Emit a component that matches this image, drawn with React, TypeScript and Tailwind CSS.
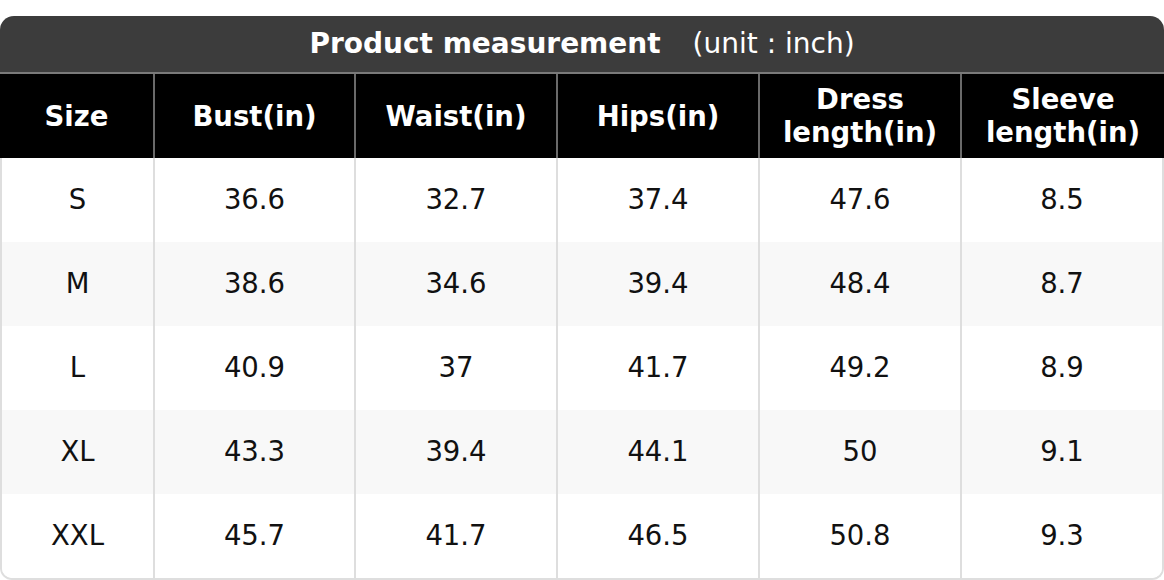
const headers = ["Size", "Bust(in)", "Waist(in)", "Hips(in)", "Dress length(in)", "Sleeve length(in)"];

const rows = [
  ["S", "36.6", "32.7", "37.4", "47.6", "8.5"],
  ["M", "38.6", "34.6", "39.4", "48.4", "8.7"],
  ["L", "40.9", "37", "41.7", "49.2", "8.9"],
  ["XL", "43.3", "39.4", "44.1", "50", "9.1"],
  ["XXL", "45.7", "41.7", "46.5", "50.8", "9.3"],
];

export default function App() {
  return (
    <div className="bg-white pt-4 font-['DejaVu_Sans',sans-serif]">
      {/* Title */}
      <div className="flex h-14 items-center justify-center rounded-t-[14px] bg-[#3c3c3c] text-[28px] text-white">
        <span className="font-bold">Product measurement</span>
        <span className="ml-8">(unit : inch)</span>
      </div>
      <div className="h-[2px] bg-[#7a7a7a]" />

      {/* Header */}
      <div className="grid h-[84px] grid-cols-[155px_201px_202px_202px_202px_1fr] bg-black">
        {headers.map((h, i) => (
          <div
            key={h}
            className={`flex items-center justify-center px-2 text-center text-[27.5px] font-bold leading-[33px] text-white ${
              i < headers.length - 1 ? "border-r-2 border-[#6a6a6a]" : ""
            }`}
          >
            {h}
          </div>
        ))}
      </div>

      {/* Body */}
      <div className="overflow-hidden rounded-b-[12px] border-x-2 border-b-2 border-[#dedede]">
        {rows.map((r, ri) => (
          <div
            key={r[0]}
            className={`grid h-[84px] grid-cols-[153px_201px_202px_202px_202px_1fr] ${
              ri % 2 === 1 ? "bg-[#f8f8f8]" : "bg-white"
            }`}
          >
            {r.map((v, i) => (
              <div
                key={i}
                className={`flex items-center justify-center text-[27.5px] text-[#111] ${
                  i < r.length - 1 ? "border-r-2 border-[#dedede]" : ""
                }`}
              >
                {v}
              </div>
            ))}
          </div>
        ))}
      </div>
    </div>
  );
}
